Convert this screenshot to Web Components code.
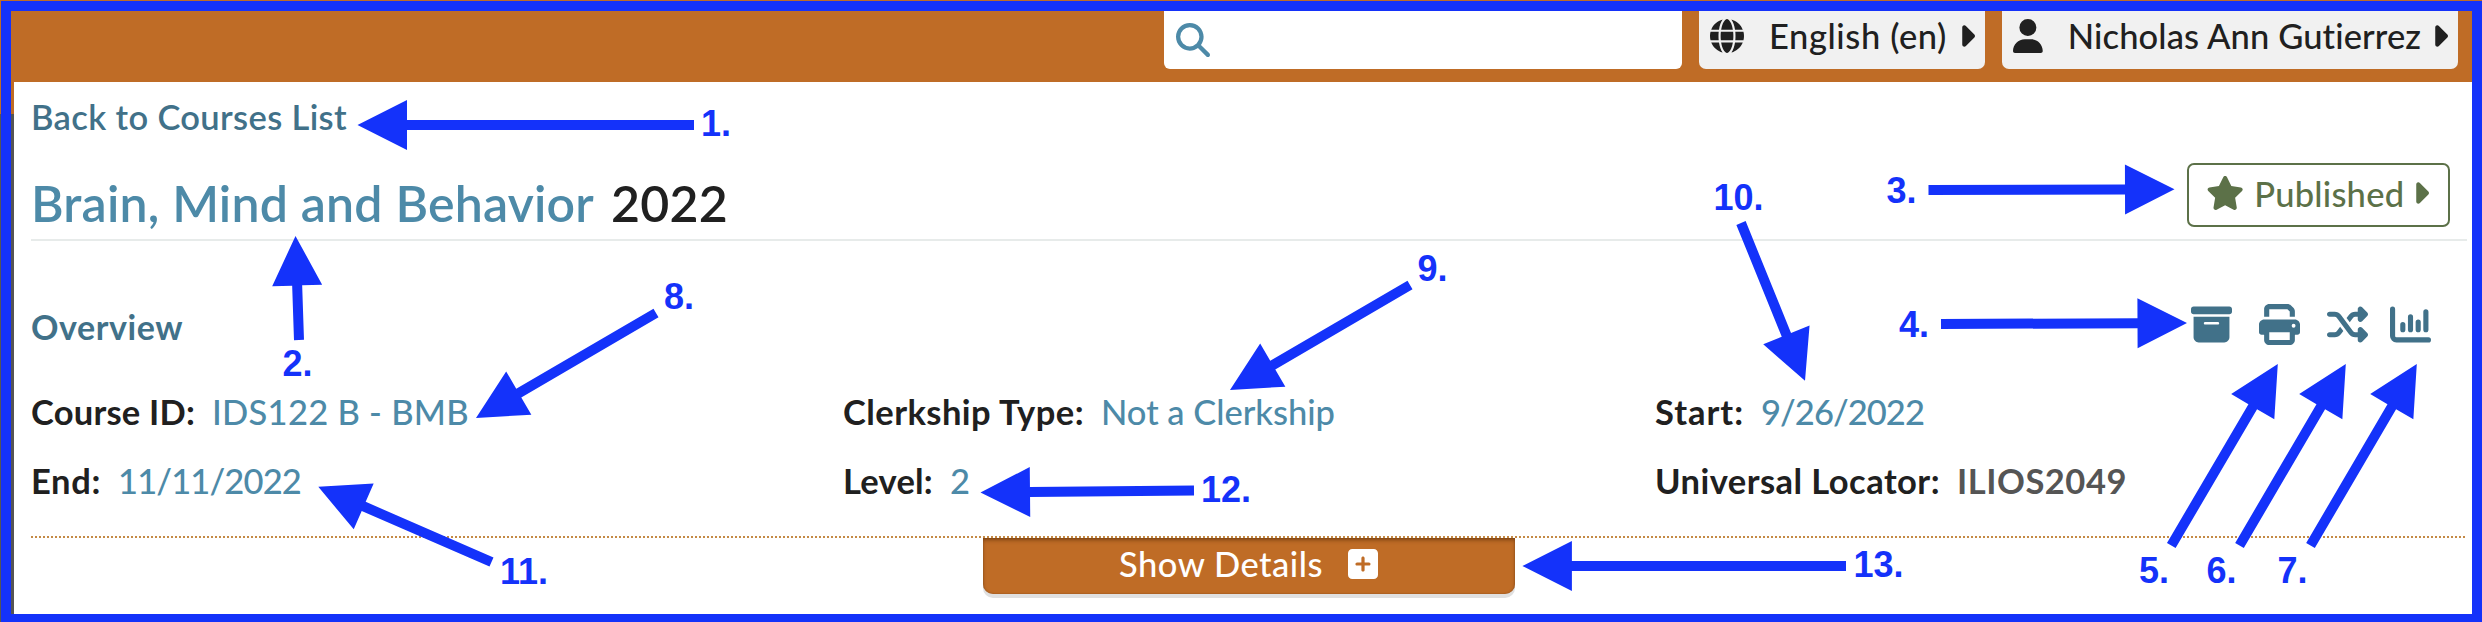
<!DOCTYPE html>
<html lang="en">
<head>
<meta charset="utf-8">
<title>Brain, Mind and Behavior</title>
<style>
html,body{margin:0;padding:0}
body{width:2482px;height:622px;overflow:hidden;background:#fff;font-family:Lato,"Open Sans",sans-serif;font-size:34.5px;font-weight:500;line-height:40px;color:#202020}
</style>
</head>
<body>
<course-page></course-page>
<script>
const solid = (w, d) => ({ w, h: 512, body: `<path fill-rule="evenodd" d="${d}"/>` });
const ICONS = {
  search: solid(512, "M416 208c0 45.9-14.9 88.3-40 122.7L502.6 457.4c12.5 12.5 12.5 32.8 0 45.3s-32.8 12.5-45.3 0L330.7 376c-34.4 25.2-76.8 40-122.7 40C93.1 416 0 322.9 0 208S93.1 0 208 0S416 93.1 416 208zM208 352a144 144 0 1 0 0-288 144 144 0 1 0 0 288z"),
  globe: solid(512, "M352 256c0 22.2-1.2 43.6-3.3 64H163.3c-2.2-20.4-3.3-41.8-3.3-64s1.2-43.6 3.3-64H348.7c2.2 20.4 3.3 41.8 3.3 64zm28.8-64H503.9c5.3 20.5 8.1 41.9 8.1 64s-2.8 43.5-8.1 64H380.8c2.1-20.6 3.2-42 3.2-64s-1.1-43.4-3.2-64zm112.6-32H376.7c-10-63.9-29.8-117.4-55.3-151.6c78.3 20.7 142 77.5 171.9 151.6zm-149.1 0H167.7c6.1-36.4 15.5-68.6 27-94.7c10.5-23.6 22.2-40.7 33.5-51.5C239.4 3.2 248.7 0 256 0s16.6 3.2 27.8 13.8c11.3 10.8 23 27.9 33.5 51.5c11.6 26 20.9 58.2 27 94.7zm-209 0H18.6C48.6 85.9 112.2 29.1 190.6 8.4C165.1 42.6 145.3 96.1 135.3 160zM8.1 192H131.2c-2.1 20.6-3.2 42-3.2 64s1.1 43.4 3.2 64H8.1C2.8 299.5 0 278.1 0 256s2.8-43.5 8.1-64zM194.7 446.6c-11.6-26-20.9-58.2-27-94.6H344.3c-6.1 36.4-15.5 68.6-27 94.6c-10.5 23.6-22.2 40.7-33.5 51.5C272.6 508.8 263.3 512 256 512s-16.6-3.2-27.8-13.8c-11.3-10.8-23-27.9-33.5-51.5zM135.3 352c10 63.9 29.8 117.4 55.3 151.6C112.2 482.9 48.6 426.1 18.6 352H135.3zm358.1 0c-30 74.1-93.6 130.9-171.9 151.6c25.5-34.2 45.2-87.7 55.3-151.6H493.4z"),
  user: solid(448, "M224 256A128 128 0 1 0 224 0a128 128 0 1 0 0 256zm-45.7 48C79.8 304 0 383.8 0 482.3C0 498.7 13.3 512 29.7 512H418.3c16.4 0 29.7-13.3 29.7-29.7C448 383.8 368.2 304 269.7 304H178.3z"),
  star: solid(576, "M316.9 18C311.6 7 300.4 0 288.1 0s-23.4 7-28.8 18L195 150.3 51.4 171.5c-12 1.8-22 10.2-25.7 21.7s-.7 24.2 7.9 32.7L137.8 329 113.2 474.7c-2 12 3 24.2 12.9 31.3s23 8 33.8 2.3l128.3-68.5 128.3 68.5c10.8 5.7 23.9 4.9 33.8-2.3s14.9-19.3 12.9-31.3L438.5 329 542.7 225.9c8.6-8.5 11.7-21.2 7.9-32.7s-13.7-19.9-25.7-21.7L381.2 150.3 316.9 18z"),
  caret: solid(256, "M246.6 278.6c12.5-12.5 12.5-32.8 0-45.3l-128-128c-9.2-9.2-22.9-11.9-34.9-6.9s-19.8 16.6-19.8 29.6l0 256c0 12.9 7.8 24.6 19.8 29.6s25.7 2.2 34.9-6.9l128-128z"),
  archive: solid(512, "M32 32H480c17.7 0 32 14.3 32 32V96c0 17.7-14.3 32-32 32H32C14.3 128 0 113.7 0 96V64C0 46.3 14.3 32 32 32zm0 128H480V416c0 35.3-28.7 64-64 64H96c-35.3 0-64-28.7-64-64V160zm128 80c0 8.8 7.2 16 16 16H336c8.8 0 16-7.2 16-16s-7.2-16-16-16H176c-8.8 0-16 7.2-16 16z"),
  print: solid(512, "M128 0C92.7 0 64 28.7 64 64v96h64V64H354.7L384 93.3V160h64V93.3c0-17-6.7-33.3-18.7-45.3L400 18.7C388 6.7 371.7 0 354.7 0H128zM384 352v96H128V352H384zm64 32h32c17.7 0 32-14.3 32-32V256c0-35.3-28.7-64-64-64H64c-35.3 0-64 28.7-64 64v96c0 17.7 14.3 32 32 32H64v64c0 35.3 28.7 64 64 64H384c35.3 0 64-28.7 64-64V384zM432 248a24 24 0 1 1 0 48 24 24 0 1 1 0-48z"),
  shuffle: solid(512, "M403.8 34.4c12-5 25.7-2.2 34.9 6.9l64 64c6 6 9.4 14.1 9.4 22.6s-3.4 16.6-9.4 22.6l-64 64c-9.2 9.2-22.9 11.9-34.9 6.9s-19.8-16.6-19.8-29.6V160H352c-10.1 0-19.6 4.7-25.6 12.8L284 229.3 244 176l31.2-41.6C293.3 110.2 321.8 96 352 96h32V64c0-12.9 7.8-24.6 19.8-29.6zM164 282.7L204 336l-31.2 41.6C154.7 401.8 126.2 416 96 416H32c-17.7 0-32-14.3-32-32s14.3-32 32-32H96c10.1 0 19.6-4.7 25.6-12.8L164 282.7zm274.6 188c-9.2 9.2-22.9 11.9-34.9 6.9s-19.8-16.6-19.8-29.6V416H352c-30.2 0-58.7-14.2-76.8-38.4L121.6 172.8c-6-8.1-15.5-12.8-25.6-12.8H32c-17.7 0-32-14.3-32-32s14.3-32 32-32H96c30.2 0 58.7 14.2 76.8 38.4L326.4 339.2c6 8.1 15.5 12.8 25.6 12.8h32V320c0-12.9 7.8-24.6 19.8-29.6s25.7-2.2 34.9 6.9l64 64c6 6 9.4 14.1 9.4 22.6s-3.4 16.6-9.4 22.6l-64 64z"),
  chart: { w: 512, h: 512, body: '<path fill="none" stroke="currentColor" stroke-width="64" stroke-linecap="round" d="M32 64V400a48 48 0 0 0 48 48H480M160 256v64M256 160v160M352 224v96M448 96v224"/>' },
  plus: { w: 448, h: 448, body: '<path fill-rule="evenodd" d="M64 0H384a64 64 0 0 1 64 64V384a64 64 0 0 1-64 64H64a64 64 0 0 1-64-64V64A64 64 0 0 1 64 0zM200 312c0 32 48 32 48 0V248h64c32 0 32-48 0-48h-64v-64c0-32-48-32-48 0v64h-64c-32 0-32 48 0 48h64z"/>' }
};

function define(name, html, ready) {
  const t = document.createElement("template");
  t.innerHTML = html;
  customElements.define(name, class extends HTMLElement {
    connectedCallback() {
      if (this.shadowRoot) return;
      this.attachShadow({ mode: "open" }).append(t.content.cloneNode(true));
      if (ready) ready.call(this, this.shadowRoot);
    }
  });
}

/* <ui-icon name size>: size is the height in pixels */
define("ui-icon", `<style>:host{display:block;flex:none}svg{display:block;fill:currentColor}</style><svg></svg>`, function (root) {
  const i = ICONS[this.getAttribute("name")], h = +this.getAttribute("size"), svg = root.querySelector("svg");
  svg.setAttribute("viewBox", `0 0 ${i.w} ${i.h}`);
  svg.setAttribute("height", h);
  svg.setAttribute("width", h * i.w / i.h);
  svg.innerHTML = i.body;
});

/* <fit-text width>: one line of text tracked to a given width */
define("fit-text", `<style>:host{display:block;flex:none;white-space:nowrap}span{display:inline-block}</style><span><slot></slot></span>`, function (root) {
  const w = +this.getAttribute("width"), s = root.querySelector("span");
  const n = this.textContent.length;
  this.style.width = w + "px";
  s.style.letterSpacing = (w - s.getBoundingClientRect().width) / n + "px";
});

/* header */
define("header-menu", `<style>
:host{display:flex;box-sizing:border-box;height:69px;background:#f1f1f1;border-radius:0 0 7px 7px;padding:16px 0 0 11px}
</style><slot></slot>`);

define("app-header", `<style>
:host{display:flex;height:82px;background:#bf6c26;padding-left:1164px;align-items:flex-start}
.search{width:518px;height:69px;box-sizing:border-box;background:#fff;border-radius:0 0 6px 6px;padding:23px 0 0 12px;color:#4d8aa8}
.lang{width:286px;margin-left:17px}.user{width:456px;margin-left:17px}
header-menu ui-icon{margin-top:3px}
header-menu fit-text{margin-left:25px}
.lang .c{margin-left:11px}.user .c{margin-left:9px}
</style>
<div class="search"><ui-icon name="search" size="34"></ui-icon></div>
<header-menu class="lang"><ui-icon name="globe" size="34"></ui-icon><fit-text width="178">English (en)</fit-text><ui-icon class="c" name="caret" size="34"></ui-icon></header-menu>
<header-menu class="user"><ui-icon name="user" size="34"></ui-icon><fit-text width="354">Nicholas Ann Gutierrez</fit-text><ui-icon class="c" name="caret" size="34"></ui-icon></header-menu>`);

define("publish-button", `<style>
:host{display:flex;box-sizing:border-box;width:263px;height:64px;border:2px solid #5c7148;border-radius:7px;color:#5c7148;padding:11px 0 0 17px}
.c{margin-left:8px}fit-text{margin:-2px 0 0 10px}
</style><ui-icon name="star" size="34"></ui-icon><fit-text width="150">Published</fit-text><ui-icon class="c" name="caret" size="34"></ui-icon>`);

define("title-bar", `<style>
:host{display:flex;justify-content:space-between;box-sizing:border-box;height:104px;width:2436px;border-bottom:2px solid #e7ebea;padding-right:17px}
h1{display:flex;margin:37px 0 0;font-size:50px;line-height:58px;font-weight:600;color:#4d8aa8}
.year{margin-left:17px;color:#202020}
publish-button{margin-top:26px}
</style><h1><fit-text width="563">Brain, Mind and Behavior</fit-text><fit-text class="year" width="117">2022</fit-text></h1><publish-button></publish-button>`);

define("icon-toolbar", `<style>
:host{display:flex;color:#417189}
ui-icon+ui-icon{margin-left:27px}ui-icon[name=chart]{margin-left:22px}
</style><ui-icon name="archive" size="41"></ui-icon><ui-icon name="print" size="41"></ui-icon><ui-icon name="shuffle" size="41"></ui-icon><ui-icon name="chart" size="41"></ui-icon>`);

define("data-field", `<style>
:host{display:flex;gap:17px;height:40px}
::slotted([slot=value]){color:#4d8aa8}
</style><slot name="label"></slot><slot name="value"></slot>`);

define("course-overview", `<style>
:host{display:block;padding-top:63px}
.head{display:flex;justify-content:space-between;height:88px;padding-right:51px;width:2451px;box-sizing:border-box}
h2{margin:3px 0 0;font-size:34px;line-height:40px;font-weight:700;color:#417189}
.grid{display:grid;grid-template-columns:812px 812px 780px;row-gap:29px}
fit-text[slot=label]{font-weight:700}
fit-text.plain{color:#555;font-weight:700}
</style>
<div class="head"><h2><fit-text width="152">Overview</fit-text></h2><icon-toolbar></icon-toolbar></div>
<div class="grid">
<data-field><fit-text slot="label" width="164">Course ID:</fit-text><fit-text slot="value" width="257">IDS122 B - BMB</fit-text></data-field>
<data-field><fit-text slot="label" width="241">Clerkship Type:</fit-text><fit-text slot="value" width="234">Not a Clerkship</fit-text></data-field>
<data-field><fit-text slot="label" width="89">Start:</fit-text><fit-text slot="value" width="163">9/26/2022</fit-text></data-field>
<data-field><fit-text slot="label" width="70">End:</fit-text><fit-text slot="value" width="183">11/11/2022</fit-text></data-field>
<data-field><fit-text slot="label" width="90">Level:</fit-text><fit-text slot="value" width="20">2</fit-text></data-field>
<data-field><fit-text slot="label" width="285">Universal Locator:</fit-text><fit-text slot="value" class="plain" width="170">ILIOS2049</fit-text></data-field>
</div>`);

define("details-toggle", `<style>
:host{display:block;margin-top:35px;width:2435px}
.dots{height:2px;background:repeating-linear-gradient(90deg,#c58a45 0 2px,transparent 2px 4px)}
.btn{display:flex;box-sizing:border-box;width:532px;height:56px;margin-left:952px;padding:6px 0 0 136px;color:#fff;background:#bf6c26;border-radius:0 0 10px 10px;box-shadow:0 4px 0 #e0e0e0,inset 0 3px 4px -1px #7d4313,inset 0 0 2px #8a4c1c}
ui-icon{margin:5px 0 0 25px}
</style><div class="dots"></div><div class="btn"><fit-text width="204">Show Details</fit-text><ui-icon name="plus" size="30"></ui-icon></div>`);

/* Numbered callouts: label, label x, baseline y, tail x/y, tip x/y */
const CALLOUTS = [
  ["1.",701,136,694,125,357.5,125],
  ["2.",282.5,375.5,299,340,295.5,236],
  ["3.",1886.5,202.5,1928.5,190,2174.5,189.3],
  ["4.",1899,336.5,1941,324,2187,323],
  ["5.",2139,583,2171.3,545.5,2277.8,364],
  ["6.",2206.5,583,2239.5,545.5,2345.8,364],
  ["7.",2277.5,583,2310.5,545.5,2416.8,364],
  ["8.",664,308.5,656,313,476,418],
  ["9.",1417.5,281,1410,285,1230,390],
  ["10.",1713.5,210,1741,223,1805,380.7],
  ["11.",500,584,491.5,562,318.3,486.7],
  ["12.",1201,501.7,1194,490.5,980.5,492.5],
  ["13.",1853.5,577,1846,566,1522.4,566]
];
define("callout-layer", `<style>
:host{display:block;position:absolute;inset:0;pointer-events:none}
svg{display:block;fill:#1432fa;font:bold 36px "Liberation Sans",Arial,sans-serif}
</style><svg width="2482" height="622"></svg>`, function (root) {
  const frame = `<path fill="#bf6c26" d="M0 0H2482V1H0zM0 0H1V114H0zM11 11H14V114H11z"/><path fill="#555" d="M0 114H1V622H0zM11 114H14V614H11z"/><path fill-rule="evenodd" d="M1 1H2482V622H1zM11 11V614H2472V11z"/>`;
  root.querySelector("svg").innerHTML = frame + CALLOUTS.map(([t, lx, ly, x0, y0, x1, y1]) => {
    const len = Math.hypot(x1 - x0, y1 - y0), a = Math.atan2(y1 - y0, x1 - x0) * 180 / Math.PI, b = len - 49.5;
    return `<path transform="translate(${x0} ${y0}) rotate(${a})" d="M0-5H${b}V-25L${len} 0L${b} 25V5H0z"/><text x="${lx}" y="${ly}">${t}</text>`;
  }).join("");
});

define("course-page", `<style>
:host{display:block;position:relative;width:2482px;height:622px;overflow:hidden;background:#fff}
main{padding:15px 0 0 31px}
.back{font-weight:600;color:#417189;height:40px}
</style>
<app-header></app-header>
<main>
<div class="back"><fit-text width="316">Back to Courses List</fit-text></div>
<title-bar></title-bar>
<course-overview></course-overview>
<details-toggle></details-toggle>
</main>
<callout-layer></callout-layer>`);
</script>
</body>
</html>
